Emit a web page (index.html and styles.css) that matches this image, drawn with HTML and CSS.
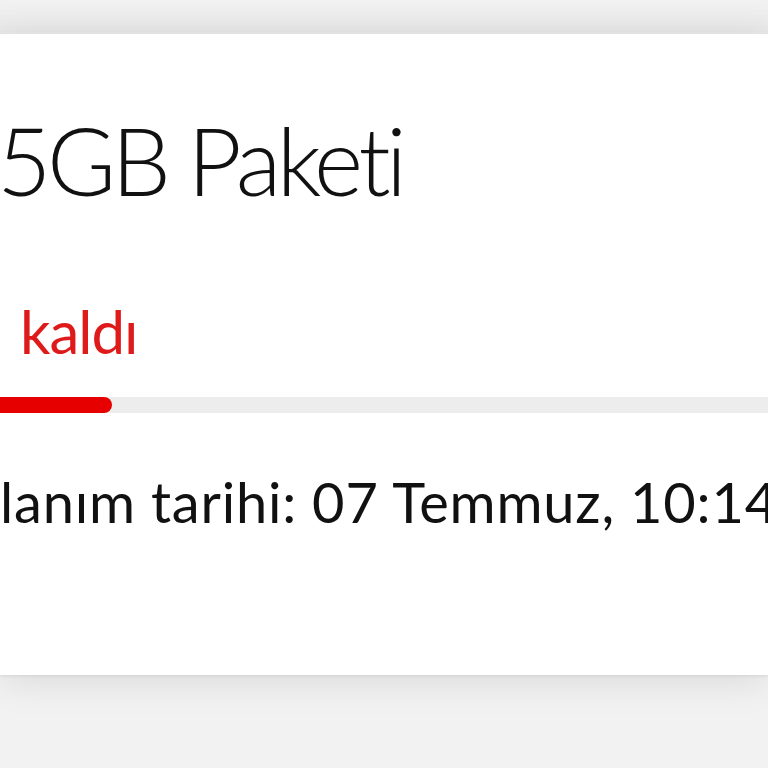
FILE: index.html
```html
<!DOCTYPE html>
<html lang="tr">
  <head>
    <meta charset="UTF-8" />
    <meta name="viewport" content="width=device-width, initial-scale=1.0" />
    <title>Paket Detayı</title>
    <link rel="stylesheet" href="styles.css">
  </head>
  <body>
    <!-- paket kartı -->
    <section class="package-card">
      <h1 class="package-title">5GB Paketi</h1>
      <p class="package-remaining">kaldı</p>
      <div class="usage-bar">
        <div class="usage-fill" style="width: 112px"></div>
      </div>
      <p class="package-date">lanım tarihi: 07 Temmuz, 10:14</p>
    </section>
  </body>
</html>
```

FILE: styles.css
```css
body {
  margin: 0;
  height: 768px;
  overflow: hidden;
  font-family: "Lato", "Noto Sans", sans-serif;
  background: linear-gradient(#f2f2f2, #e8e8e8 32px, #f2f2f2 33px);
  padding-top: 33px;
  box-sizing: border-box;
}

/* kart */
.package-card {
  height: 642px;
  background: #fff;
  border-top: 1px solid #e2e2e2;
  box-shadow: 0 6px 36px rgba(0, 0, 0, 0.1), 0 1px 3px rgba(0, 0, 0, 0.08);
  overflow: hidden;
  box-sizing: border-box;
}

.package-title {
  margin: 0 0 0 -3px;
  padding-top: 79px;
  font-size: 94px;
  font-weight: 300;
  letter-spacing: -4.5px;
  line-height: 1;
  color: #111;
  white-space: nowrap;
}

.package-remaining {
  margin: 0;
  padding: 94px 0 0 20px;
  font-size: 60px;
  letter-spacing: -1px;
  line-height: 1;
  color: #df1a1a;
}

.usage-bar {
  margin-top: 36px;
  height: 16px;
  background: #ededed;
}

.usage-fill {
  height: 100%;
  background: #e60000;
  border-radius: 0 8px 8px 0;
}

.package-date {
  margin: 0;
  padding-top: 61px;
  font-size: 56px;
  letter-spacing: 0.8px;
  line-height: 1;
  color: #111;
  white-space: nowrap;
}
```
